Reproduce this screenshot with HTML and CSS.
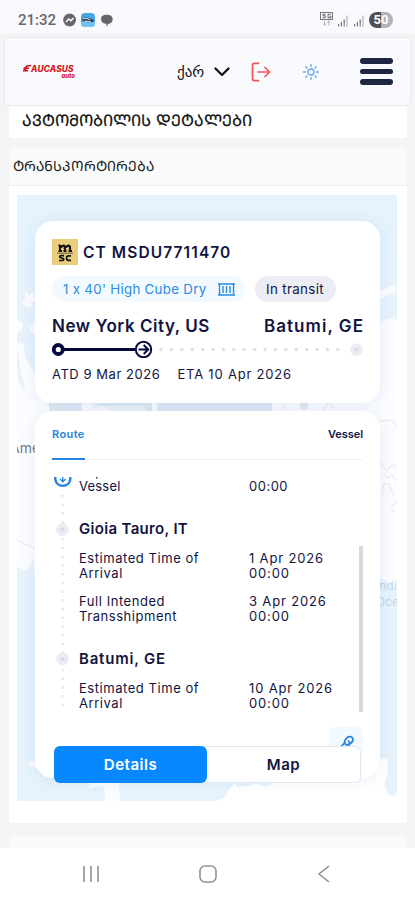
FILE: index.html
```html
<!DOCTYPE html>
<html lang="ka">
<head>
<meta charset="utf-8">
<meta name="viewport" content="width=device-width">
<title>Transportation</title>
<link rel="stylesheet" href="styles.css">
</head>
<body>
<div class="statusbar">
  <span class="clock">21:32</span>
  <svg class="notif" width="52" height="16" viewBox="0 0 52 16">
    <circle cx="6.6" cy="8" r="6.4" fill="#66666b"/><path d="M2.8 13.5v-3h4z" fill="#66666b"/>
    <path d="M3 10 5.8 7l2 1.7L10.5 6" fill="none" stroke="#fff" stroke-width="1.5"/>
    <rect x="18" y="1" width="14" height="14" rx="4" fill="#4aa5e8"/>
    <path d="M18 10h14v1a4 4 0 0 1-4 4h-6a4 4 0 0 1-4-4z" fill="#72c2f3"/>
    <path d="M19 7l3-2 4 1 5 2-1 2-5 .5-5-2z" fill="#30455f"/><path d="M20 6.500l4-.2 3 1.500M22 9l6 1" stroke="#dce8ee" fill="none"/>
    <path d="M38 7C38 3.700 40.500 2.700 43.700 2.700s6 1.300 6 4.500-2.500 4.300-4.300 4.500l-2 3v-3C40 11.700 38 10.200 38 7z" fill="#66666b"/>
  </svg>
  <svg class="signals" width="44" height="16" viewBox="0 0 44 16">
    <rect x=".5" y=".5" width="12" height="7" fill="none" stroke="#77777c"/>
    <path d="M5.500 2.300H3v1.500h2.200v2H2.500M11 2.300H8v3.500h3V4.300H9.500" fill="none" stroke="#66666b"/>
    <path d="M4.500 8.500v4.500M3 11.500l1.500 1.800L6 11.500M8.800 13.300V9M7.300 10.500l1.500-1.800 1.500 1.800" fill="none" stroke="#b5b5ba"/>
    <g fill="#77777c"><path d="M18 12h1.200v2.500H18zM20.800 10H22v4.500h-1.200zM23.600 7.500h1.200v7h-1.200zM34 12h1.200v2.500H34zM36.800 10H38v4.500h-1.200zM39.600 7.500h1.200v7h-1.200z"/></g>
    <g fill="#b5b5ba"><path d="M26.300 3.500h1.200v11h-1.200zM42.300 3.500h1.200v11h-1.200z"/></g>
  </svg>
  <span class="battery">50</span>
</div>
<header class="topbar">
  <span class="logo"><span class="logo-main"><svg width="8" height="7" viewBox="0 0 8 7"><path d="M8 .8H4.500L1.500 3.200H6M4 3.200 .8 5.700H5" fill="none" stroke="#d5141c" stroke-width="1.500"/></svg><span>AUCASUS</span></span><span class="logo-sub">auto</span></span>
  <span class="lang">ქარ</span>
  <svg class="chev" width="16" height="10" viewBox="0 0 16 10"><path d="M1.500 1.500 8 8l6.500-6.500" fill="none" stroke="#111" stroke-width="2.300" stroke-linecap="round" stroke-linejoin="round"/></svg>
  <svg class="exit" width="20" height="20" viewBox="0 0 20 20"><path d="M7.500 1.300H3.500Q1.500 1.300 1.500 3.500v13q0 2.200 2 2.200h4M7 10h11.500M14 5.500l4.500 4.500-4.500 4.500" fill="none" stroke="#f5525a" stroke-width="1.700" stroke-linecap="round" stroke-linejoin="round"/></svg>
  <svg class="sun" width="18" height="18" viewBox="0 0 18 18" fill="none" stroke="#62a6ea" stroke-width="1.300" stroke-linecap="round"><circle cx="9" cy="9" r="3"/><path d="M9 1.500v2M9 14.500v2M1.500 9h2M14.500 9h2M3.700 3.700 5 5M13 13l1.300 1.300M3.700 14.300 5 13M13 5l1.300-1.300"/></svg>
  <span class="burger"><i></i><i></i><i></i></span>
</header>
<main class="page">
  <section class="card title-card"><h2>ᲐᲕᲢᲝᲛᲝᲑᲘᲚᲘᲡ ᲓᲔᲢᲐᲚᲔᲑᲘ</h2></section>
  <section class="card transport">
    <h3>ᲢᲠᲐᲜᲡᲞᲝᲠᲢᲘᲠᲔᲑᲐ</h3>
    <div class="map">
      <svg class="land" width="380" height="606" viewBox="0 0 380 606">
        <rect width="380" height="606" fill="#e6f3fc"/>
        <g fill="#fafcff">
          <path d="M8 96l4 4 4-3 1 5 3 3-5 3 1 3-6 1-4-3-2-3 4-1zM0 124l6 5-1 5-5 4zM13 132l6-6v14l-5-3zM0 150c5-5 7-2 8 7 0 7 4 12 8 18l3 6v180L9 376 0 372V180l5 14 3-1-4-16z"/>
          <path d="M17 180h363v215l-9-7-8-6-346-3z"/>
          <path d="M362 97l9-5 6-2 2 6-10 5-7 4zM360 140l5-14 8-3 7 2v100h-20z"/>
        </g>
        <path d="M32 206h33v12H32zM75 206h60v12H96l-10-7-11 3zM140 206h115v12H140z" fill="#deebf5"/>
        <path d="M65 206h10l7 5 45 0 3 7H96l-10-4-15 3z" fill="#f8fafd" opacity=".6"/>
        <path d="M0 372c8 2 7 9 15 14h4v115H0zM363 387h8l3 8h6v115h-17z" fill="#e6f3fc"/>
        <path d="M0 346l5 1 3 3 4 0 3 3 4 0M363 226l8-1 5 2 4 4M363 265l4 8 3 3 4-5 6-1M365 278l5 5 5-3 5 6M365 300l2-12 6 2 3 10M380 308l-6 3 3 7" fill="none" stroke="#e6e8ee"/>
        <path d="M266 209l3 6M306 215l6-8M314 209l3 4" fill="none" stroke="#dfe3ea"/><circle cx="287" cy="211" r="4" fill="#deebf5"/>
        <path d="M12 571l2-5 13 3-1 6zM88 590l-17 3 3-6 5-3v-4l5-4 5 3zM93 555h7l1 22 2 29H88l-1-20z" fill="#fafcff"/>
        <path d="M200 606l8-4 4-8 6-6 2 4 12-1 4-3 5 1 7 3 12-5 18-2 14-7 58-1 1-12 7-3 3 2 9-1 1 13-4 13 4 10 6 3 3-4v12z" fill="#fff"/>
      </svg>
      <span class="geo geo-am">Ame</span>
      <span class="geo geo-io">Indian<br>Ocean</span>
      <div class="panel summary">
        <div class="row carrier">
          <svg width="26" height="26" viewBox="0 0 26 26"><rect width="26" height="26" fill="#e9cd7d"/><path d="M8 12.500V6M12.800 12.500V8Q12.500 6 10.500 7L8 8.500M18 12.500V8Q17.500 6 15.500 7L13 8.500M6.500 12h3.500M11.500 12h3M16.500 12h3.500M6.500 6.500h2" fill="none" stroke="#111" stroke-width="2.100"/><path d="M5 14.200h16" stroke="#111" stroke-width=".6"/><path d="M12 16.700H9.300Q7.500 16.700 7.700 17.900t2 1.100 2 1.300-2 1.200H7M19 16.800h-2.500q-2 0-2 2.300t2 2.300H19" fill="none" stroke="#111" stroke-width="1.700"/></svg>
          <b class="cno">CT MSDU7711470</b>
        </div>
        <div class="row pills">
          <span class="pill blue"><span>1 x 40' High Cube Dry</span><svg width="17" height="13" viewBox="0 0 17 13" fill="none" stroke="#2b8be6" stroke-width="1.400"><path d="M0 1h17M0 12h17M1.500 1v11M15.500 1v11M5 3v7M8.500 3v7M12 3v7"/></svg></span>
          <span class="pill grey">In transit</span>
        </div>
        <div class="row ends"><b class="from">New York City, US</b><b class="to">Batumi, GE</b></div>
        <svg class="track" width="312" height="18" viewBox="0 0 312 18"><path d="M12 9.500h72" stroke="#06093b" stroke-width="3"/><circle cx="6.300" cy="9.500" r="4.500" fill="#fff" stroke="#06093b" stroke-width="3.800"/><circle cx="91.500" cy="9.500" r="7.700" fill="#fff" stroke="#06093b" stroke-width="2"/><path d="M86.500 9.500h9M91.700 5l4.500 4.500-4.500 4.500" fill="none" stroke="#06093b" stroke-width="2"/><path d="M109 9.500h186" stroke="#dfdfe8" stroke-width="3.600" stroke-linecap="round" stroke-dasharray="0 10.400"/><circle cx="304.500" cy="9.500" r="6.300" fill="#ececf4"/><circle cx="304.500" cy="9.500" r="2" fill="#dcdce8"/></svg>
        <div class="row dates"><span class="atd">ATD 9 Mar 2026</span><span class="eta">ETA 10 Apr 2026</span></div>
      </div>
      <div class="panel details">
        <div class="tabs"><span class="tab on">Route</span><span class="tab vessel">Vessel</span></div>
        <div class="scroll">
          <svg class="line" width="22" height="235" viewBox="0 0 22 235"><path d="M10.500 19v212" stroke="#e4e4ed" stroke-width="2.600" stroke-linecap="round" stroke-dasharray="0 8.700"/><path d="M3.300-1v3.500a7.600 7.600 0 0 0 15 0V-1" fill="none" stroke="#2584df" stroke-width="2.400"/><path d="M10.800 0v5M8 2l2.800 2.800L13.600 2" fill="none" stroke="#2584df" stroke-width="1.300"/><circle cx="10.500" cy="52.500" r="6.500" fill="#ececf4"/><circle cx="10.500" cy="52.500" r="2.300" fill="#dcdce8"/><circle cx="10.500" cy="182" r="6.500" fill="#ececf4"/><circle cx="10.500" cy="182" r="2.300" fill="#dcdce8"/></svg>
          <div class="events">
            <div class="ev first"><span>Vessel</span><span class="date">00:00</span></div>
            <b class="place gioia">Gioia Tauro, IT</b>
            <div class="ev"><span>Estimated Time of<br>Arrival</span><span class="date">1 Apr 2026<br>00:00</span></div>
            <div class="ev last"><span>Full Intended<br>Transshipment</span><span class="date">3 Apr 2026<br>00:00</span></div>
            <b class="place batumi">Batumi, GE</b>
            <div class="ev"><span>Estimated Time of<br>Arrival</span><span class="date">10 Apr 2026<br>00:00</span></div>
          </div>
          <i class="thumb"></i>
        </div>
        <span class="link"><svg width="18" height="16" viewBox="0 0 18 16" fill="none" stroke="#2584df" stroke-width="1.700" stroke-linecap="round"><path d="M8.500 10C5 8 7 4.500 9 2.800c2-1.800 4.500-1.500 5.500.2s0 3.700-1.500 5-3 1.500-3 1.500M10.500 6c2 2 1 4-1 6M6 8.500l-3.500 3.700Q1 14 2 15"/></svg></span>
      </div>
      <div class="switch"><span class="on">Details</span><span>Map</span></div>
    </div>
  </section>
  <section class="card next"></section>
</main>
<nav class="navbar">
  <svg width="18" height="18" viewBox="0 0 18 18"><path d="M2 1v16M9 1v16M16 1v16" stroke="#929292" stroke-width="1.600"/></svg>
  <svg width="18" height="18" viewBox="0 0 18 18"><rect x="1" y="1" width="16" height="16" rx="5" fill="none" stroke="#929292" stroke-width="1.600"/></svg>
  <svg width="18" height="18" viewBox="0 0 18 18"><path d="M14 1 4 9l10 8" fill="none" stroke="#929292" stroke-width="1.600"/></svg>
</nav>
</body>
</html>
```
FILE: styles.css
```css
* { box-sizing: border-box; }
body { margin: 0; height: 900px; overflow: hidden; display: flex; flex-direction: column; background: #f4f4f4; color: #12143f; font-family: Inter, "DejaVu Sans", sans-serif; font-feature-settings: "calt" 0; }
svg { display: block; flex: none; }
h2, h3 { margin: 0; font-weight: 400; }
.statusbar { flex: none; height: 34px; padding: 5px 22px 0 18px; background: #f8f8fd; display: flex; align-items: center; }
.clock { font: 500 15px Roboto, sans-serif; color: #68686c; width: 38px; margin-right: 7px; }
.signals { margin-left: auto; margin-right: 5px; }
.battery { width: 24px; height: 16px; border-radius: 8px; background: linear-gradient(90deg, #505055 50%, #b2b2b7 50%); color: #fff; font: 700 13px/16px Roboto, sans-serif; text-align: center; }
.topbar { flex: none; position: relative; z-index: 2; height: 69px; margin: 3px 4px 0 4px; padding: 0 17px 0 18px; border: 1px solid #e7e9ee; border-radius: 4px; background: #f8fafd; display: flex; align-items: center; }
.logo { display: flex; flex-direction: column; width: 52px; color: #d5141c; font-style: italic; font-weight: 800; }
.logo-main { display: flex; align-items: center; font-size: 8.300px; line-height: 8px; letter-spacing: .2px; }
.logo-sub { font-size: 6px; line-height: 6px; text-align: right; }
.lang { margin-left: 102px; width: 27px; font-size: 15px; color: #111; }
.chev { margin-left: 10px; }
.exit { margin-left: 21px; }
.sun { margin-left: 31px; }
.burger { margin-left: auto; width: 33px; display: flex; flex-direction: column; gap: 5px; }
.burger i { height: 5.500px; border-radius: 3px; background: #1d2740; }
.page { flex: 1; min-height: 0; overflow: hidden; padding: 0 8px 0 9px; display: flex; flex-direction: column; }
.card { flex: none; background: #fff; border-radius: 4px; overflow: hidden; }
.title-card { height: 32px; padding: 2px 13px 0; }
h2 { font-size: 16px; line-height: 25px; color: #111; white-space: nowrap; -webkit-text-stroke: .2px #111; }
.transport { height: 676px; margin-top: 9px; }
h3 { height: 39px; padding: 0 4px; line-height: 38px; font-size: 14px; color: #222; background: #fafafa; border-bottom: 1px solid #f1f1f1; }
.map { position: relative; width: 380px; height: 606px; margin: 9px 0 0 8px; padding: 26px 17px 0 18px; overflow: hidden; }
.land { position: absolute; left: 0; top: 0; }
.geo { position: absolute; color: #777b88; font-size: 14px; line-height: 16px; }
.geo-am { left: -7px; top: 245px; }
.geo-io { left: 359px; top: 383px; color: #bdd8ec; font-size: 12px; }
.panel { position: relative; background: #fff; border-radius: 18px; box-shadow: 0 2px 16px rgba(60, 80, 150, .09); }
.summary { height: 182px; padding: 18px 17px 0; }
.row { display: flex; align-items: center; white-space: nowrap; }
.carrier { gap: 5px; height: 26px; }
.cno { font-size: 15.500px; font-weight: 600; letter-spacing: 1.100px; }
.pills { margin-top: 11px; gap: 10px; }
.pill { height: 26px; border-radius: 13px; padding: 0 10px 0 11px; display: flex; align-items: center; font-size: 13.300px; }
.blue { width: 193px; background: #f3faff; color: #2b8be6; justify-content: space-between; letter-spacing: .3px; }
.grey { width: 81px; background: #ececf4; letter-spacing: .35px; }
.ends { margin-top: 12px; height: 24px; justify-content: space-between; font-size: 17px; }
.ends b { font-weight: 600; }
.from { letter-spacing: .55px; }
.to { letter-spacing: 1.050px; margin-right: -1px; }
.track { margin-top: 2px; }
.dates { margin-top: 7px; height: 17px; font-size: 13px; gap: 17px; }
.atd { letter-spacing: .55px; }
.eta { letter-spacing: .8px; }
.details { height: 367px; margin-top: 8px; padding: 0 17px; overflow: hidden; }
.tabs { height: 49px; display: flex; justify-content: space-between; border-bottom: 1px solid #f1f1f6; font-size: 11px; font-weight: 600; line-height: 47px; }
.tab { height: 49px; letter-spacing: -.05px; }
.tab.on { color: #2584df; border-bottom: 2px solid #2584df; letter-spacing: .4px; }
.scroll { position: relative; height: 235px; margin-top: 17px; overflow: hidden; display: flex; }
.events { margin-left: 5px; font-size: 13px; line-height: 15px; letter-spacing: .55px; }
.ev { display: grid; grid-template-columns: 170px 110px; margin-bottom: 13px; }
.ev.first { padding-top: 2px; margin-bottom: 25px; letter-spacing: .2px; background: linear-gradient(#33355a, #33355a) 17px 0 / 1.500px 1.500px no-repeat; }
.ev.last { margin-bottom: 25px; }
.date { letter-spacing: .84px; }
.first .date { letter-spacing: .5px; }
.place { display: block; font-size: 15px; line-height: 20px; font-weight: 600; margin-bottom: 12px; }
.gioia { letter-spacing: .32px; }
.batumi { letter-spacing: .8px; }
.thumb { position: absolute; right: 0; top: 69px; width: 4px; height: 166px; background: #d9d9db; }
.link { position: absolute; right: 17px; top: 316px; width: 34px; height: 34px; border-radius: 6px; background: #f2f9ff; padding: 8px 9px; }
.switch { position: absolute; left: 37px; top: 551px; width: 307px; height: 37px; border: 1px solid #e3e6ee; border-radius: 6px; background: #fff; display: flex; text-align: center; font-size: 15px; font-weight: 600; line-height: 35px; letter-spacing: .5px; }
.switch > span { flex: 1; }
.switch .on { margin: -1px 0 -1px -1px; line-height: 37px; background: #0888ff; color: #fff; border-radius: 6px; }
.next { height: 30px; margin-top: 12px; background: #fafafa; }
.navbar { flex: none; height: 52px; background: #fff; padding: 0 82px; display: flex; align-items: center; justify-content: space-between; }
```
